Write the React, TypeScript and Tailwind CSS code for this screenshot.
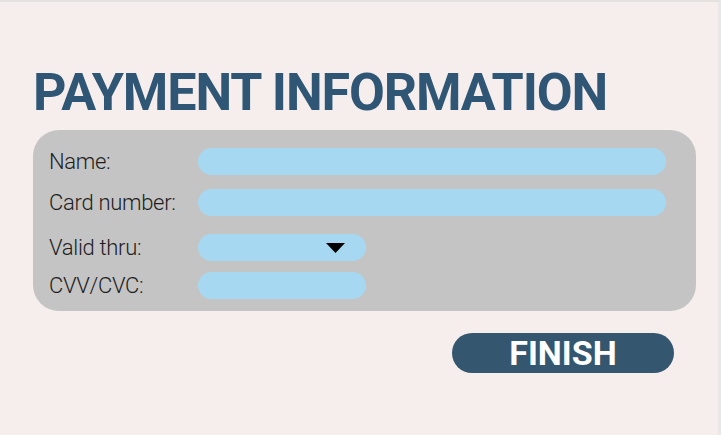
import React from 'react';

const Field = ({ label, short, select }: { label: string; short?: boolean; select?: boolean }) => (
  <div className="flex items-center h-[27px]">
    <span className="w-[149px] text-[22px] font-light text-[#1e1e1e] leading-none tracking-[-0.3px]">{label}</span>
    <div
      className={`relative h-[27px] rounded-full bg-[#a6d9f1] ${short ? 'w-[168px]' : 'w-[468px]'}`}
    >
      {select && (
        <svg className="absolute left-[128px] top-[9px]" width="19" height="10" viewBox="0 0 19 10">
          <polygon points="0,0 19,0 9.5,10" fill="#000" />
        </svg>
      )}
    </div>
  </div>
);

const App = () => {
  return (
    <div
      className="w-[721px] h-[435px] bg-[#f5eeed] border-t-2 border-t-[#e6e1e1] border-r-[3px] border-r-[#ece7e7] overflow-hidden"
      style={{ fontFamily: 'Roboto, "Liberation Sans", sans-serif' }}
    >
      <div className="pl-[33px] pt-[65px]">
        <h1 className="text-[52px] font-bold text-[#2f5674] leading-none tracking-[-1.1px]">
          PAYMENT INFORMATION
        </h1>
        <div className="mt-[11px] w-[663px] h-[181px] bg-[#c4c4c4] rounded-[26px] pl-[16px] pt-[18px] flex flex-col gap-[14px]">
          <Field label="Name:" />
          <Field label="Card number:" />
          <div className="mt-[4px] flex flex-col gap-[11px]">
            <Field label="Valid thru:" short select />
            <Field label="CVV/CVC:" short />
          </div>
        </div>
        <div className="flex justify-end w-[641px] mt-[22px]">
          <button className="w-[222px] h-[40px] rounded-full bg-[#34566f] text-white text-[34px] font-bold leading-none flex items-center justify-center">
            FINISH
          </button>
        </div>
      </div>
    </div>
  );
};

export default App;
